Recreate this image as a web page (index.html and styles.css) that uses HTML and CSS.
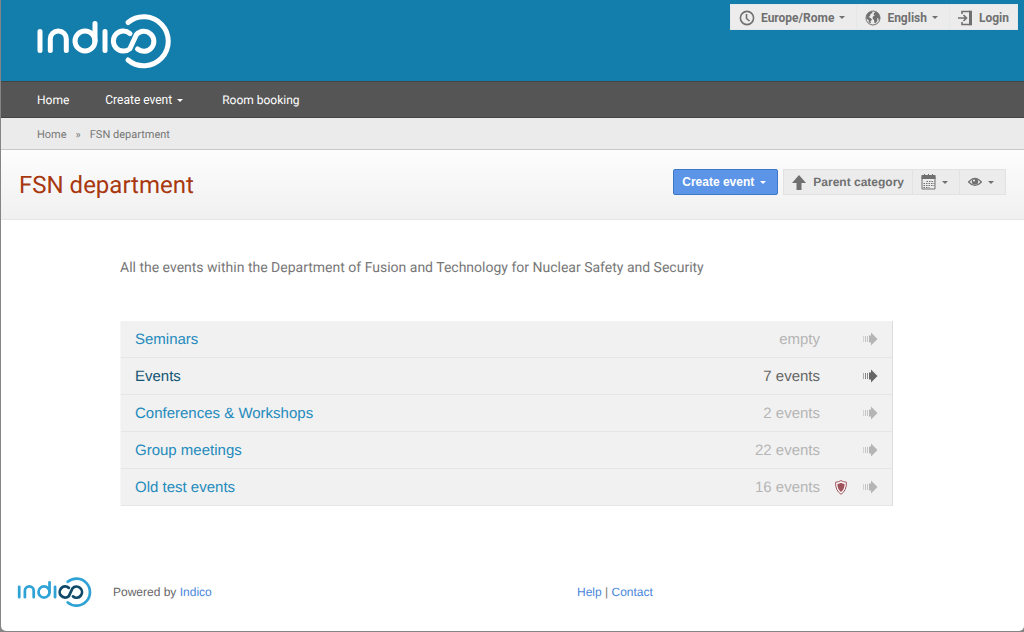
FILE: index.html
```html
<!DOCTYPE html>
<html lang="en">
<head>
<meta charset="utf-8">
<meta name="viewport" content="width=device-width, initial-scale=1">
<title>FSN department</title>
<link rel="stylesheet" href="styles.css">
</head>
<body>
<svg class="defs" aria-hidden="true">
  <symbol id="logo-word" viewBox="36 12 136 58">
    <path d="M40 31.500V50.500M50.300 50.500V39a8 8 0 0 1 16 0V50.500M95 23.500V41M105 31.500V50.500"/>
    <circle cx="85" cy="41" r="10"/>
    <path d="M128 22.500A24.500 24.500 0 1 1 128 60"/>
  </symbol>
  <symbol id="logo-loop" viewBox="36 12 136 58">
    <path d="M130 33.500A10 10 0 1 0 130 48.500L136.500 34.500A10 10 0 1 1 137.500 49"/>
  </symbol>
  <symbol id="arrow" viewBox="0 0 16 14">
    <path d="M1.500 4v6" stroke="currentColor" opacity=".5"/>
    <path d="M3.500 4v6M5.500 4v6" stroke="currentColor" opacity=".75"/>
    <path d="M7 3.500h2V.5l6.500 6.500L9 13.500v-3H7z" fill="currentColor"/>
  </symbol>
</svg>
<div class="page">
  <header class="top">
    <a class="logo" href="#" aria-label="Indico">
      <svg class="mark" viewBox="0 0 136 58"><use href="#logo-word" width="136" height="58"/><use href="#logo-loop" width="136" height="58"/></svg>
    </a>
    <div class="group session">
      <button class="btn zone" type="button">
        <svg width="16" height="16" viewBox="0 0 16 16" fill="none" stroke="currentColor" stroke-width="1.600"><circle cx="8" cy="8" r="6.600"/><path d="M7.500 4v4.500l3 2.500"/></svg>
        Europe/Rome<span class="caret"></span></button>
      <button class="btn lang" type="button">
        <svg width="16" height="16" viewBox="0 0 16 16"><circle cx="8" cy="8" r="7" fill="none" stroke="currentColor"/><path fill="currentColor" d="M1.500 5L4 2.200 7 1.500 7.500 3 5.500 4 5 6 3.500 7 5.500 8 7 9.500 5.500 11.500 6 13.500 4 12.500 3.500 10 1.500 8.500zM9 3l2-1.500 3 2.500 1 4-1 3-1-3-1 .5.500 2-2 3-1-.5-.5-3-1.500-1.500.5-2L10 5.500 8.500 5z"/></svg>
        English<span class="caret"></span></button>
      <button class="btn login" type="button">
        <svg width="15" height="16" viewBox="0 0 15 16" fill="none" stroke="currentColor" stroke-width="1.600"><path d="M4 4V1.500h8M4 12v2.500h8M0 8h8M5.500 5l3 3-3 3"/><path d="M12.500 .7v14.600" stroke-width="3"/></svg>
        Login</button>
    </div>
  </header>
  <nav class="nav">
    <a href="#">Home</a>
    <button type="button">Create event<span class="caret"></span></button>
    <a href="#">Room booking</a>
  </nav>
  <nav class="crumbs" aria-label="Breadcrumb">
    <a href="#">Home</a><span class="sep">»</span><span>FSN department</span>
  </nav>
  <section class="title">
    <h1>FSN department</h1>
    <div class="actions">
      <button class="btn primary" type="button">Create event<span class="caret"></span></button>
      <div class="group tools">
        <a class="btn parent" href="#">
          <svg width="14" height="15" viewBox="0 0 14 15" fill="currentColor"><path d="M7 0l7 8h-4.500v7h-5V8H0z"/></svg>
          Parent category</a>
        <button class="btn calendar" type="button" aria-label="Calendar">
          <svg width="15" height="16" viewBox="0 0 15 16"><path d="M1 2.500h13v12.500H1z" fill="none" stroke="currentColor"/><path d="M.5 1h14v4H.5zM3 0h1v2H3zM7 0h1v2H7zM11 0h1v2h-1z" fill="currentColor"/><path d="M5.500 7.500h8M2.500 9.500h11M2.500 11.500h11M2.500 13.500h6" stroke="currentColor" stroke-width="1.200" stroke-dasharray="1.500 1"/></svg>
          <span class="caret"></span></button>
        <button class="btn view" type="button" aria-label="View">
          <svg width="14" height="12" viewBox="0 0 14 12"><path d="M.6 6Q7-1.500 13.400 6 7 13 .6 6z" fill="none" stroke="currentColor" stroke-width="1.200"/><circle cx="7" cy="5.500" r="3.200" fill="currentColor"/><circle cx="6" cy="4.500" r="1" fill="#eee"/></svg>
          <span class="caret"></span></button>
      </div>
    </div>
  </section>
  <main class="content">
    <p class="intro">All the events within the Department of Fusion and Technology for Nuclear Safety and Security</p>
    <ul class="list">
      <li><a href="#">Seminars</a><span class="count">empty</span><span class="shield"></span><svg class="arrow"><use href="#arrow"/></svg></li>
      <li class="active"><a href="#">Events</a><span class="count">7 events</span><span class="shield"></span><svg class="arrow"><use href="#arrow"/></svg></li>
      <li><a href="#">Conferences &amp; Workshops</a><span class="count">2 events</span><span class="shield"></span><svg class="arrow"><use href="#arrow"/></svg></li>
      <li><a href="#">Group meetings</a><span class="count">22 events</span><span class="shield"></span><svg class="arrow"><use href="#arrow"/></svg></li>
      <li><a href="#">Old test events</a><span class="count">16 events</span><span class="shield"><svg width="12" height="15" viewBox="0 0 12 15"><path d="M6 .6Q8 2 11.400 2.200 11.700 10.500 6 14.300.3 10.500.6 2.200 4 2 6 .6z" fill="#fff" stroke="#a0525a"/><path d="M6 2.800q1.500 1 3.600 1.200Q9.500 9.500 6 12 2.500 9.500 2.400 4 4.500 3.800 6 2.800z" fill="#a0525a"/></svg></span><svg class="arrow"><use href="#arrow"/></svg></li>
    </ul>
  </main>
  <footer class="footer">
    <div class="powered">
      <svg class="mark small" viewBox="0 0 136 58"><use class="light" href="#logo-word" width="136" height="58"/><use class="dark" href="#logo-loop" width="136" height="58"/></svg>
      <span>Powered by <a href="#">Indico</a></span>
    </div>
    <div class="links"><a href="#">Help</a> | <a href="#">Contact</a></div>
  </footer>
</div>
</body>
</html>
```
FILE: styles.css
```css
* { box-sizing: border-box; }
body {
  margin: 0;
  background: #858585;
  font-family: "Liberation Sans", Arial, sans-serif;
  color: #777;
  text-rendering: geometricPrecision;
}
a { color: inherit; text-decoration: none; }
button { font: inherit; color: inherit; margin: 0; cursor: pointer; }
.defs { position: absolute; width: 0; height: 0; }
.page {
  min-height: calc(100vh - 1px);
  margin: 0 0 1px 1px;
  display: flex;
  flex-direction: column;
  background: #fff;
  border-radius: 0 0 5px 5px;
}
.caret {
  border: 3px solid transparent;
  border-top-color: currentColor;
  border-bottom: 0;
}
.top {
  height: 81px;
  padding: 4px 6px 0 35px;
  display: flex;
  justify-content: space-between;
  align-items: flex-start;
  background: #137eac;
}
.logo { padding-top: 8px; }
.mark {
  display: block;
  width: 136px;
  height: 58px;
  fill: none;
  stroke: #fff;
  stroke-width: 5;
  stroke-linecap: round;
}
.mark.small { width: 75px; height: 32px; }
.light { stroke: #2fa3d6; }
.dark { stroke: #114a68; }
.group { display: flex; }
.btn {
  height: 26px;
  display: flex;
  align-items: center;
  padding: 0 8px;
  border: 1px solid #e2e2e2;
  background: #ececec;
  color: #707070;
  font-size: 12px;
  font-weight: bold;
  white-space: nowrap;
}
.group .btn + .btn { border-left: 0; }
.btn svg { flex: none; }
.session .btn {
  font-family: Roboto, sans-serif;
  padding: 1px 8px 0;
  border-color: #e4e8ea;
}
.session svg { margin-right: 6px; }
.session .caret { margin: 0 3px 0 5px; }
.nav {
  height: 37px;
  padding: 0 36px;
  display: flex;
  align-items: center;
  gap: 36px;
  background: #555;
  border-top: 1px solid #444;
  border-bottom: 1px solid #444;
  color: #fff;
  font-family: Roboto, sans-serif;
  font-size: 12px;
}
.nav button {
  display: flex;
  align-items: center;
  padding: 0;
  border: 0;
  background: none;
}
.nav .caret { margin: 2px 3px 0 5px; }
.crumbs {
  height: 32px;
  padding: 1px 36px 0;
  display: flex;
  align-items: center;
  gap: 9px;
  background: #ebebeb;
  border-bottom: 1px solid #c8c8c8;
  font-family: Roboto, sans-serif;
  font-size: 11px;
}
.title {
  height: 70px;
  padding: 0 18px;
  display: flex;
  justify-content: space-between;
  background: linear-gradient(#fdfdfd, #f0f0f0);
  border-bottom: 1px solid #e6e6e6;
}
.title h1 {
  margin: 0;
  line-height: 70px;
  color: #a8380f;
  font-family: Roboto, sans-serif;
  font-size: 24px;
  font-weight: 400;
}
.actions { display: flex; gap: 5px; padding-top: 19px; }
.primary {
  background: #5c94e8;
  border-color: #3f77c8;
  border-radius: 2px;
  color: #fff;
}
.actions .caret { margin: 0 3px 0 6px; }
.parent svg { margin-right: 7px; }
.content {
  flex: 1;
  width: 100%;
  max-width: 1022px;
  padding: 38px 130px 0 119px;
}
.intro {
  margin: 0 0 43px;
  font-family: Roboto, sans-serif;
  font-size: 14px;
  line-height: 20px;
}
.list {
  margin: 0;
  padding: 0;
  list-style: none;
  border-left: 1px solid #f6f6f6;
  border-right: 1px solid #ddd;
  background: #f1f1f1;
  font-size: 15px;
}
.list li {
  height: 37px;
  padding: 0 14px;
  display: flex;
  align-items: center;
  border-bottom: 1px solid #e6e6e6;
  color: #b5b5b5;
}
.list a { flex: 1; color: #248bbd; }
.list .active { color: #666; }
.list .active a { color: #125574; }
.shield { width: 42px; padding-left: 15px; display: flex; }
.arrow { width: 16px; height: 14px; }
.footer {
  display: grid;
  grid-template-columns: 560px 1fr;
  align-items: center;
  padding: 0 16px 23px;
  font-size: 12px;
}
.powered { display: flex; align-items: center; gap: 21px; color: #666; }
.footer a { color: #4a86dc; }
```
